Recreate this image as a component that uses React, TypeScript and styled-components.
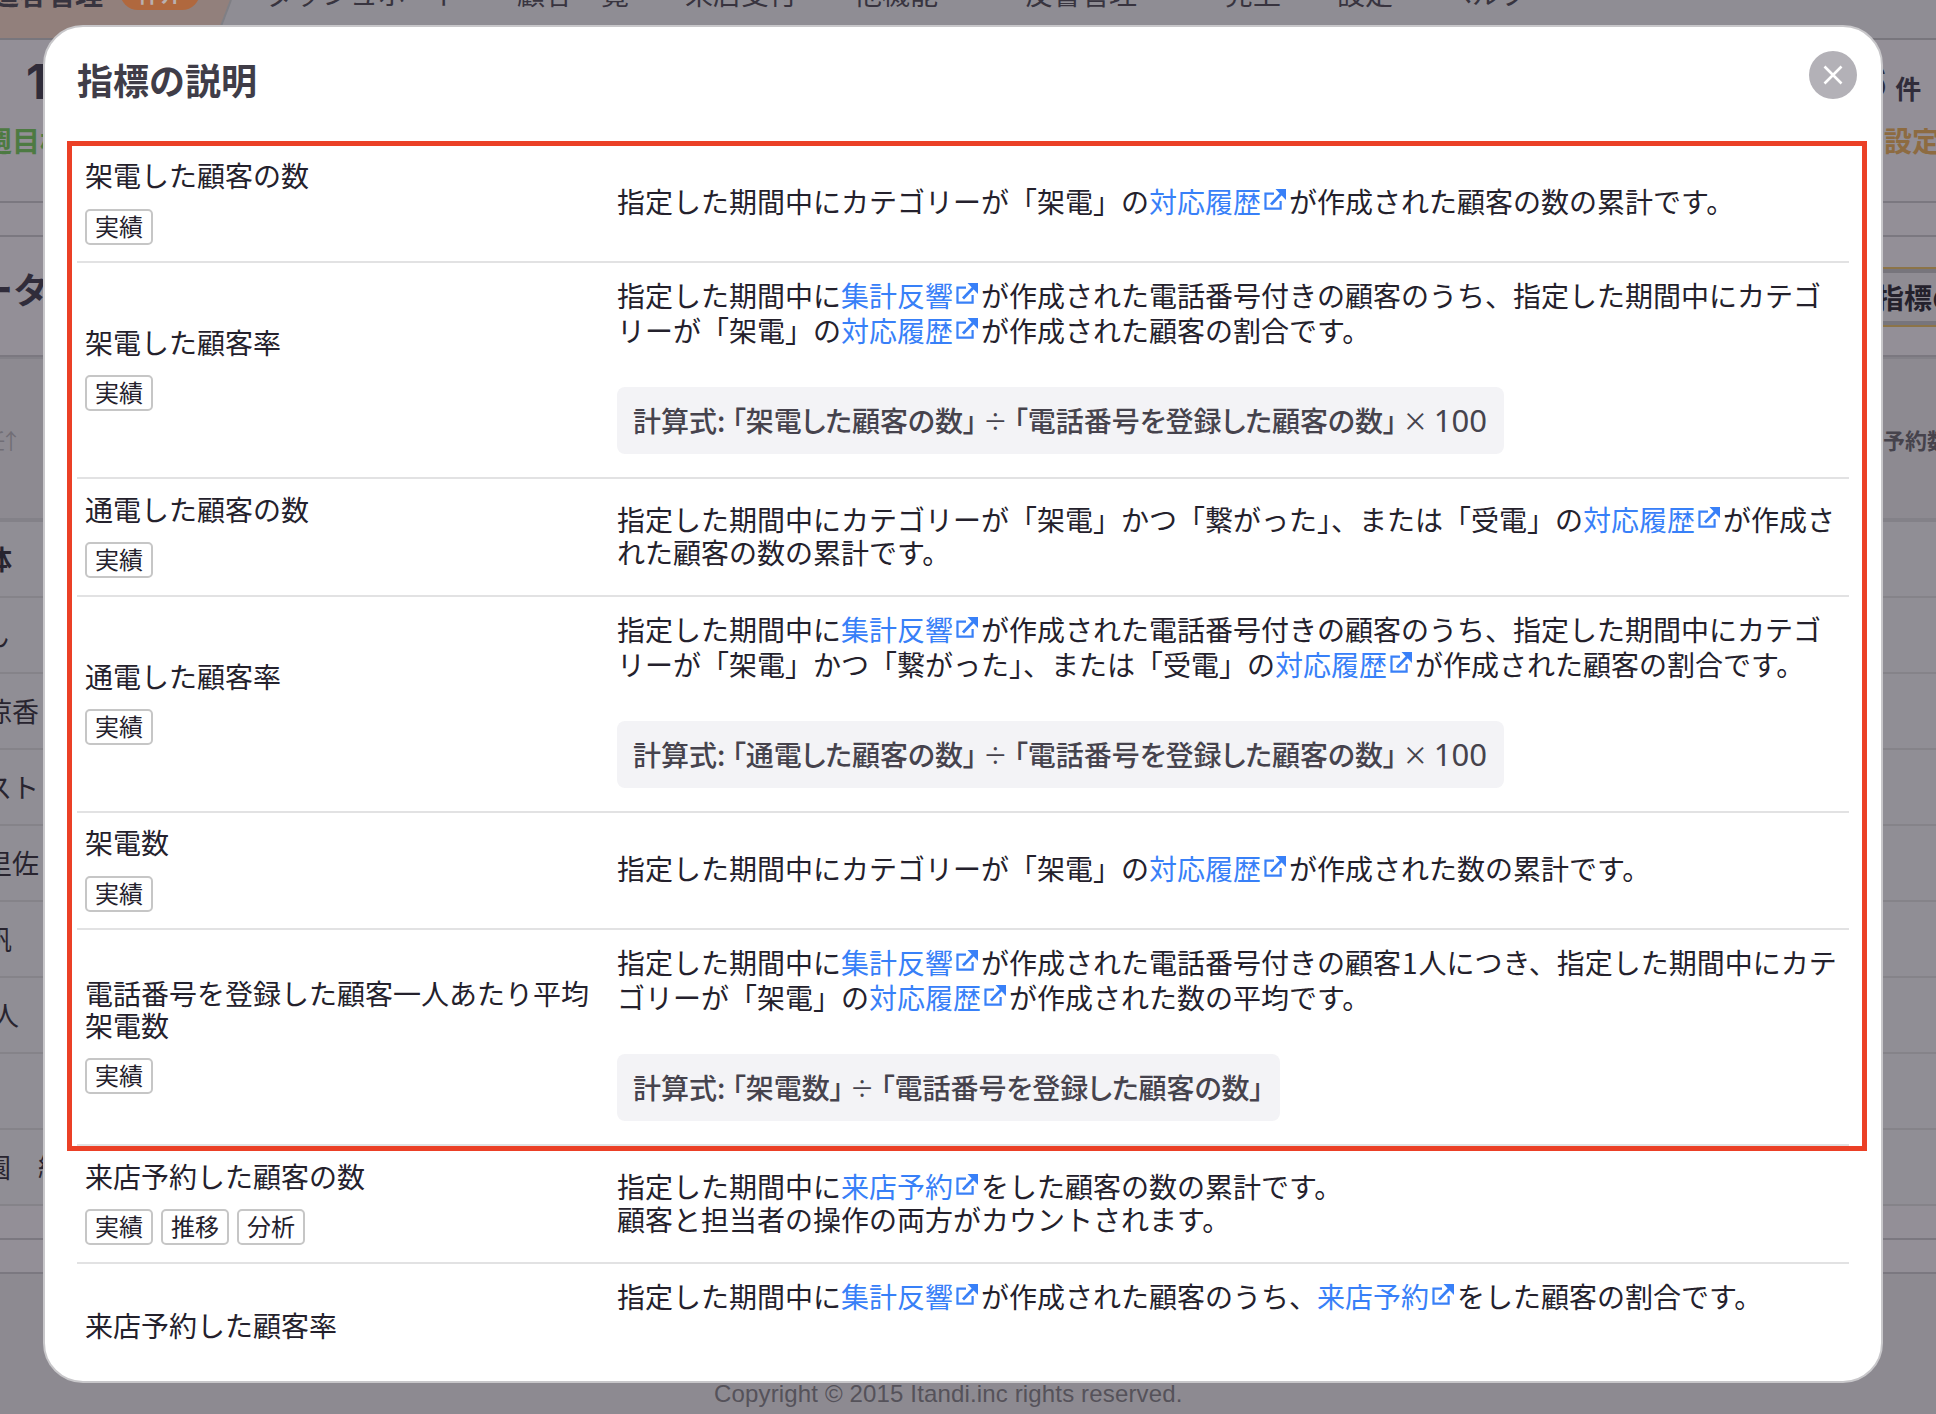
import React from "react";
import styled, { createGlobalStyle } from "styled-components";

const GlobalStyle = createGlobalStyle`
  * { box-sizing: border-box; }
  body {
    margin: 0;
    font-family: "Noto Sans CJK JP", sans-serif;
    color: #24212c;
  }
`;

const Page = styled.div`
  position: relative;
  width: 1936px;
  height: 1414px;
  overflow: hidden;
  background: #8d8a91;
`;

/* ---------- dimmed page behind the dialog ---------- */

const Nav = styled.header`
  display: flex;
  height: 40px;
  background: #8f8d94;
  border-bottom: 2px solid #78767d;
`;

const Brand = styled.div`
  position: relative;
  display: flex;
  width: 266px;
  height: 38px;
  flex: none;
`;

const BrandShape = styled.svg`
  position: absolute;
  left: 0;
  top: 0;
`;

const BrandName = styled.span`
  position: relative;
  width: 103px;
  height: 28px;
  margin-top: -21px;
  display: flex;
  justify-content: flex-end;
  font-size: 28px;
  line-height: 28px;
  font-weight: 700;
  white-space: nowrap;
  color: #38343f;
`;

const BrandPill = styled.span`
  position: relative;
  width: 80px;
  height: 36px;
  margin: -26px 0 0 17px;
  border-radius: 18px;
  background: #b0683e;
  color: #b9b0b0;
  font-size: 22px;
  line-height: 37px;
  font-weight: 700;
  text-align: center;
`;

const NavItem = styled.span<{ $after: number }>`
  height: 28px;
  margin: -21px ${(p) => p.$after}px 0 0;
  font-size: 28px;
  line-height: 28px;
  white-space: nowrap;
  color: #38343f;
`;

const Panel = styled.section<{ $height: number }>`
  display: flex;
  justify-content: space-between;
  height: ${(p) => p.$height}px;
  background: #938f97;
  border-bottom: 2px solid #7b7880;
`;

const StatSide = styled.div<{ $width: number }>`
  width: ${(p) => p.$width}px;
  overflow: hidden;
  padding-top: 14px;
`;

const Figure = styled.div<{ $indent: number }>`
  display: flex;
  align-items: baseline;
  gap: 8px;
  height: 60px;
  margin-left: ${(p) => p.$indent}px;
  font: 700 48px/56px "Inter", sans-serif;
  color: #302c3a;
`;

const Unit = styled.span`
  font: 700 26px/30px "Noto Sans CJK JP", sans-serif;
`;

const Goal = styled.div<{ $tone: string; $indent: number }>`
  margin: 10px 0 0 ${(p) => p.$indent}px;
  font-size: 28px;
  line-height: 32px;
  font-weight: 700;
  white-space: nowrap;
  color: ${(p) => p.$tone};
`;

const Heading = styled.div`
  width: 54px;
  margin-left: -5px;
  padding-top: 26px;
  display: flex;
  justify-content: flex-end;
  font-size: 36px;
  line-height: 50px;
  font-weight: 700;
  white-space: nowrap;
  color: #302c3a;
`;

const GuideButton = styled.div`
  width: 60px;
  height: 60px;
  margin-top: 30px;
  border: solid #8c7448;
  border-width: 2px 0;
  background: #8f8c93;
  box-shadow: inset 0 4px #77757c, inset 0 -4px #77757c;
  font-size: 28px;
  line-height: 56px;
  font-weight: 700;
  white-space: nowrap;
`;

const TableHead = styled.div`
  display: flex;
  justify-content: space-between;
  align-items: center;
  height: 165px;
  background: #8d8a91;
  border-top: 2px solid #838188;
  border-bottom: 4px solid #838188;
  font-size: 22px;
  font-weight: 700;
`;

const SortHint = styled.span`
  margin-left: -17px;
  font-size: 22px;
  font-weight: 400;
  letter-spacing: -5px;
  color: #716e76;
`;

const HeadLabel = styled.span`
  width: 53px;
  overflow: hidden;
  white-space: nowrap;
  color: #46434c;
`;

const TableRow = styled.div`
  height: 76px;
  background: #908e95;
  border-bottom: 2px solid #858389;
`;

const NameCell = styled.div<{ $end: number; $bold?: boolean }>`
  display: flex;
  justify-content: flex-end;
  width: ${(p) => p.$end}px;
  font-size: 27px;
  line-height: 73px;
  font-weight: ${(p) => (p.$bold ? 700 : 400)};
  white-space: pre;
  color: #28242f;
`;

const Footer = styled.footer`
  margin-top: 106px;
  padding-left: 714px;
  font: 24px/28px "Liberation Sans", Arial, sans-serif;
  letter-spacing: 0.15px;
  color: #55525a;
`;

/* ---------- dialog ---------- */

const Dialog = styled.div`
  position: absolute;
  left: 43px;
  top: 25px;
  width: 1840px;
  height: 1358px;
  display: flex;
  flex-direction: column;
  overflow: hidden;
  border: 2px solid #c8c7ca;
  border-radius: 40px;
  background: #fff;
`;

const DialogHead = styled.div`
  display: flex;
  justify-content: space-between;
  flex: none;
  height: 119px;
  padding: 24px 24px 0 32px;
`;

const Title = styled.h1`
  margin: 0;
  padding-top: 2px;
  font-size: 36px;
  line-height: 52px;
  font-weight: 700;
  color: #403d48;
`;

const CloseButton = styled.button`
  display: flex;
  align-items: center;
  justify-content: center;
  width: 48px;
  height: 48px;
  padding: 0;
  border: 0;
  border-radius: 50%;
  background: #b3b1b7;
`;

const List = styled.div`
  margin: 0 32px;
`;

const Item = styled.div<{ $height: number }>`
  display: grid;
  grid-template-columns: 532px 1fr;
  align-items: center;
  height: ${(p) => p.$height}px;
  padding-left: 8px;
  border-bottom: 2px solid #e2e2e3;
`;

const Term = styled.div<{ $top?: number }>`
  align-self: ${(p) => (p.$top ? "start" : "center")};
  padding: ${(p) => p.$top || 0}px 24px ${(p) => (p.$top ? 0 : 2)}px 0;
  font-size: 28px;
  line-height: 31.5px;
`;

const Badges = styled.div`
  display: flex;
  gap: 8px;
  margin-top: 17px;
`;

const Badge = styled.span`
  width: 68px;
  height: 36px;
  border: 2px solid #c6c6c6;
  border-radius: 5px;
  font-size: 24px;
  line-height: 30px;
  text-align: center;
`;

const Detail = styled.div<{ $top?: boolean }>`
  align-self: ${(p) => (p.$top ? "start" : "center")};
  padding: ${(p) => (p.$top ? "15px 0 0" : "0 0 4px")};
`;

const Line = styled.div<{ $height: number }>`
  height: ${(p) => p.$height}px;
  font-size: 28px;
  line-height: ${(p) => p.$height}px;
  white-space: nowrap;
`;

const Link = styled.a`
  color: #3880f8;
`;

const LinkIcon = styled.svg`
  margin: 0 3.5px 0 2.5px;
  vertical-align: 3px;
`;

const Digit = styled.span`
  margin: 0 1px;
`;

const Formula = styled.div`
  display: flex;
  align-items: center;
  width: max-content;
  height: 67px;
  margin-top: 39px;
  padding: 0 16px 2px;
  border-radius: 8px;
  background: #f3f3f6;
  font-size: 28px;
  line-height: 40px;
  font-weight: 500;
  font-feature-settings: "palt";
  white-space: pre;
  color: #46434d;
`;

const Operator = styled.span`
  margin: 0 7.5px;
  font-family: "Noto Sans", sans-serif;
  font-weight: 300;
  font-size: 38px;
`;

const Factor = styled.span`
  margin-right: 1px;
  font-family: "Noto Sans", sans-serif;
  font-weight: 400;
  font-size: 31px;
`;

const Highlight = styled.div`
  position: absolute;
  left: 67px;
  top: 141px;
  width: 1800px;
  height: 1010px;
  border: 5px solid #eb4026;
  pointer-events: none;
`;

function Ext({ children }: { children: string }) {
  return (
    <Link>
      {children}
      <LinkIcon width="22" height="21" viewBox="0 0 22 21" fill="none">
        <path d="M10 4.6H1.500V19.700H16.600V12" stroke="currentColor" strokeWidth="2.200" />
        <path d="M7 15.500L17.500 4.500" stroke="currentColor" strokeWidth="2.800" />
        <path d="M11.500 0H22V11Z" fill="currentColor" />
      </LinkIcon>
    </Link>
  );
}

type Metric = {
  name: string;
  tags: string[];
  height: number;
  termTop?: number;
  lines: React.ReactNode[];
  lineHeights?: number[];
  numerator?: string;
  percent?: boolean;
};

const metrics: Metric[] = [
  {
    name: "架電した顧客の数",
    tags: ["実績"],
    height: 117,
    lines: [<>指定した期間中にカテゴリーが「架電」の<Ext>対応履歴</Ext>が作成された顧客の数の累計です。</>],
  },
  {
    name: "架電した顧客率",
    tags: ["実績"],
    height: 216,
    lines: [
      <>指定した期間中に<Ext>集計反響</Ext>が作成された電話番号付きの顧客のうち、指定した期間中にカテゴ</>,
      <>リーが「架電」の<Ext>対応履歴</Ext>が作成された顧客の割合です。</>,
    ],
    numerator: "架電した顧客の数",
    percent: true,
  },
  {
    name: "通電した顧客の数",
    tags: ["実績"],
    height: 118,
    lines: [
      <>指定した期間中にカテゴリーが「架電」かつ「繋がった」、または「受電」の<Ext>対応履歴</Ext>が作成さ</>,
      <>れた顧客の数の累計です。</>,
    ],
    lineHeights: [34, 33],
  },
  {
    name: "通電した顧客率",
    tags: ["実績"],
    height: 216,
    lines: [
      <>指定した期間中に<Ext>集計反響</Ext>が作成された電話番号付きの顧客のうち、指定した期間中にカテゴ</>,
      <>リーが「架電」かつ「繋がった」、または「受電」の<Ext>対応履歴</Ext>が作成された顧客の割合です。</>,
    ],
    numerator: "通電した顧客の数",
    percent: true,
  },
  {
    name: "架電数",
    tags: ["実績"],
    height: 117,
    lines: [<>指定した期間中にカテゴリーが「架電」の<Ext>対応履歴</Ext>が作成された数の累計です。</>],
  },
  {
    name: "電話番号を登録した顧客一人あたり平均架電数",
    tags: ["実績"],
    height: 216,
    lines: [
      <>指定した期間中に<Ext>集計反響</Ext>が作成された電話番号付きの顧客<Digit>1</Digit>人につき、指定した期間中にカテ</>,
      <>ゴリーが「架電」の<Ext>対応履歴</Ext>が作成された数の平均です。</>,
    ],
    numerator: "架電数",
  },
  {
    name: "来店予約した顧客の数",
    tags: ["実績", "推移", "分析"],
    height: 118,
    lines: [
      <>指定した期間中に<Ext>来店予約</Ext>をした顧客の数の累計です。</>,
      <>顧客と担当者の操作の両方がカウントされます。</>,
    ],
    lineHeights: [34, 33],
  },
  {
    name: "来店予約した顧客率",
    tags: [],
    height: 216,
    termTop: 46,
    lines: [<>指定した期間中に<Ext>集計反響</Ext>が作成された顧客のうち、<Ext>来店予約</Ext>をした顧客の割合です。</>],
  },
];

const navItems: [string, number][] = [
  ["ダッシュボード", 55],
  ["顧客一覧", 56],
  ["来店受付", 57],
  ["他機能", 87],
  ["反響管理", 88],
  ["売上", 56],
  ["設定", 51],
  ["ヘルプ", 0],
];

const people: { name: string; end: number; bold?: boolean }[] = [
  { name: "全体", end: 12, bold: true },
  { name: "さくら　りん", end: 9 },
  { name: "涼香", end: 39 },
  { name: "テスト", end: 39 },
  { name: "里佐", end: 39 },
  { name: "帆", end: 12 },
  { name: "人", end: 19 },
  { name: "", end: 0 },
  { name: "園　結", end: 65 },
];

export default function App() {
  return (
    <>
      <GlobalStyle />
      <Page>
        <Nav>
          <Brand>
            <BrandShape width="240" height="38" viewBox="0 0 240 38">
              <path d="M0 0H230.500L216 38H0Z" fill="#92807c" />
              <path d="M231 0L216.500 38" stroke="#7f7f85" strokeWidth="2" />
            </BrandShape>
            <BrandName>追客管理</BrandName>
            <BrandPill>仲介</BrandPill>
          </Brand>
          {navItems.map(([label, after]) => (
            <NavItem key={label} $after={after}>
              {label}
            </NavItem>
          ))}
        </Nav>
        <Panel $height={163}>
          <StatSide $width={43}>
            <Figure $indent={26}>1</Figure>
            <Goal $tone="#4d7a42" $indent={-16}>週目標</Goal>
          </StatSide>
          <StatSide $width={68}>
            <Figure $indent={-12}>
              6<Unit>件</Unit>
            </Figure>
            <Goal $tone="#8d6b41" $indent={16}>設定</Goal>
          </StatSide>
        </Panel>
        <Panel $height={34} />
        <Panel $height={120}>
          <Heading>データ</Heading>
          <GuideButton>指標の説明</GuideButton>
        </Panel>
        <TableHead>
          <SortHint>任↑</SortHint>
          <HeadLabel>予約数</HeadLabel>
        </TableHead>
        {people.map((p, i) => (
          <TableRow key={i}>
            <NameCell $end={p.end} $bold={p.bold}>
              {p.name}
            </NameCell>
          </TableRow>
        ))}
        <Panel $height={34} />
        <Panel $height={34} />
        <Footer>Copyright © 2015 Itandi.inc rights reserved.</Footer>

        <Dialog role="dialog">
          <DialogHead>
            <Title>指標の説明</Title>
            <CloseButton aria-label="閉じる">
              <svg width="20" height="20" viewBox="0 0 20 20">
                <path d="M1.500 1.500L18.500 18.500M18.500 1.500L1.500 18.500" stroke="#fff" strokeWidth="2.600" />
              </svg>
            </CloseButton>
          </DialogHead>
          <List>
            {metrics.map((m) => (
              <Item key={m.name} $height={m.height}>
                <Term $top={m.termTop}>
                  {m.name}
                  {m.tags.length > 0 && (
                    <Badges>
                      {m.tags.map((t) => (
                        <Badge key={t}>{t}</Badge>
                      ))}
                    </Badges>
                  )}
                </Term>
                <Detail $top={Boolean(m.numerator || m.termTop)}>
                  {m.lines.map((l, i) => (
                    <Line key={i} $height={m.lineHeights ? m.lineHeights[i] : 35}>
                      {l}
                    </Line>
                  ))}
                  {m.numerator && (
                    <Formula>
                      <span>計算式: 「{m.numerator}」</span>
                      <Operator>÷</Operator>
                      <span>「電話番号を登録した顧客の数」</span>
                      {m.percent && (
                        <>
                          <Operator>×</Operator>
                          <Factor>100</Factor>
                        </>
                      )}
                    </Formula>
                  )}
                </Detail>
              </Item>
            ))}
          </List>
        </Dialog>
        <Highlight />
      </Page>
    </>
  );
}
